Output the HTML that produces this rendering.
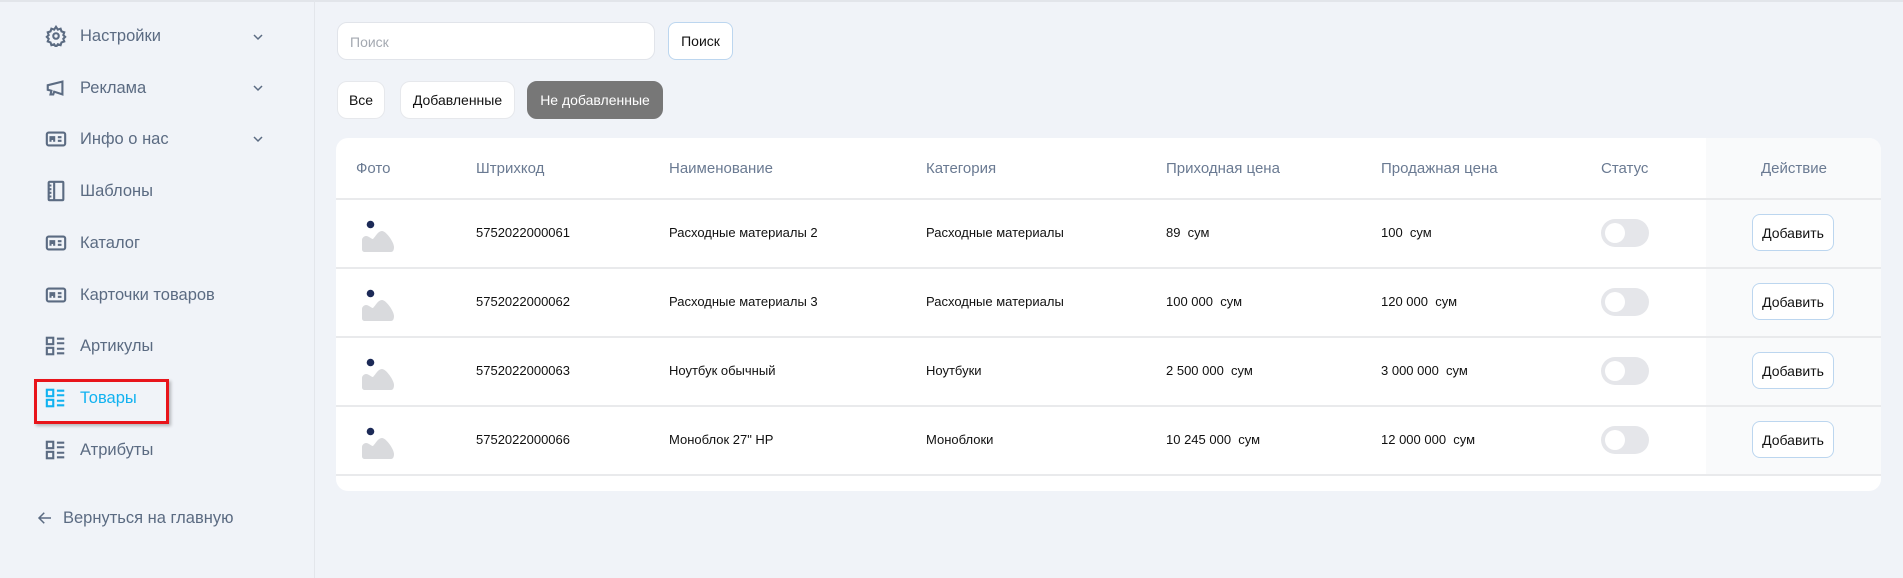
<!DOCTYPE html>
<html><head><meta charset="utf-8"><style>
*{box-sizing:border-box;margin:0;padding:0}
body{width:1903px;height:578px;background:#f0f3f8;font-family:"Liberation Sans",sans-serif;position:relative;overflow:hidden}
.topl{position:absolute;left:0;top:0;width:1903px;height:2px;background:#e2e5ea}
.side{position:absolute;left:0;top:0;width:315px;height:578px;border-right:1px solid #e3e6eb}
.mi{position:absolute;left:45px;height:24px;display:flex;align-items:center;font-size:16.5px;color:#5b6b82}
.mi svg{width:22px;height:22px;margin-right:13px}
.chev{position:absolute;left:252px;width:12px;height:12px}
.abs{position:absolute}
.inp{left:337px;top:22px;width:318px;height:38px;background:#fff;border:1px solid #e1e4ea;border-radius:10px;font-size:14px;color:#a4a9b1;padding:11px 12px}
.btn{background:#fff;border:1px solid #bcd6ef;border-radius:8px;font-size:14px;color:#111;display:flex;align-items:center;justify-content:center}
.chip{top:81px;height:38px;background:#fff;border:1px solid #e6e8ec;border-radius:10px;font-size:14px;color:#111;display:flex;align-items:center;justify-content:center}
.card{left:336px;top:138px;width:1545px;height:353px;background:#fff;border-radius:12px;overflow:hidden}
.act{position:absolute;left:1370px;top:0;width:175px;height:337px;background:#f9fafb}
.hd{position:absolute;top:22px;font-size:15px;color:#6a7a92}
.line{position:absolute;left:0;width:1545px;height:2px;background:#e9eaec}
.td{position:absolute;font-size:13px;color:#111}
.tog{position:absolute;left:1265px;width:48px;height:28px;border-radius:14px;background:#e5e6ea}
.tog:after{content:"";position:absolute;left:4px;top:4px;width:20px;height:20px;border-radius:50%;background:#fff}
.add{position:absolute;left:1416px;width:82px;height:37px}
</style></head><body>
<div class="topl"></div>
<div class="side">
<div class="mi" style="top:24px"><svg viewBox="0 0 24 24" fill="none" stroke="#5b6b82" stroke-width="2.3"><circle cx="12" cy="12" r="3"/><path d="M12 2l2 3 3-1 1 3 3 1-1 3 2 2-2 2 1 3-3 1-1 3-3-1-2 3-2-3-3 1-1-3-3-1 1-3-2-2 2-2-1-3 3-1 1-3 3 1z"/></svg>Настройки</div>
<svg class="chev" style="top:31px" viewBox="0 0 12 12"><path d="M2 4l4 4 4-4" fill="none" stroke="#5b6b82" stroke-width="1.5"/></svg>
<div class="mi" style="top:76px"><svg viewBox="0 0 24 24" fill="none" stroke="#5b6b82" stroke-width="2.3"><path d="M3 9v5l4 1-1 4h3l1-3 9 3V5L3 9z"/></svg>Реклама</div>
<svg class="chev" style="top:82px" viewBox="0 0 12 12"><path d="M2 4l4 4 4-4" fill="none" stroke="#5b6b82" stroke-width="1.5"/></svg>
<div class="mi" style="top:127px"><svg viewBox="0 0 24 24" fill="none" stroke="#5b6b82" stroke-width="2.3"><rect x="2" y="5" width="20" height="14" rx="2"/><path d="M6 15v-5h4v5M6 12h4M14 10h4M14 14h4"/></svg>Инфо о нас</div>
<svg class="chev" style="top:133px" viewBox="0 0 12 12"><path d="M2 4l4 4 4-4" fill="none" stroke="#5b6b82" stroke-width="1.5"/></svg>
<div class="mi" style="top:179px"><svg viewBox="0 0 24 24" fill="none" stroke="#5b6b82" stroke-width="2.3"><rect x="4" y="2" width="16" height="20" rx="1"/><path d="M10 2v20M4 6h3M4 10h3M4 14h3M4 18h3"/></svg>Шаблоны</div>
<div class="mi" style="top:231px"><svg viewBox="0 0 24 24" fill="none" stroke="#5b6b82" stroke-width="2.3"><rect x="2" y="5" width="20" height="14" rx="2"/><path d="M6 15v-5h4v5M6 12h4M14 10h4M14 14h4"/></svg>Каталог</div>
<div class="mi" style="top:283px"><svg viewBox="0 0 24 24" fill="none" stroke="#5b6b82" stroke-width="2.3"><rect x="2" y="5" width="20" height="14" rx="2"/><path d="M6 15v-5h4v5M6 12h4M14 10h4M14 14h4"/></svg>Карточки товаров</div>
<div class="mi" style="top:334px"><svg viewBox="0 0 24 24" fill="none" stroke="#5b6b82" stroke-width="2.3"><rect x="2" y="3" width="7" height="7"/><rect x="2" y="14" width="7" height="7"/><path d="M13 4h8M13 9h8M13 15h8M13 20h8"/></svg>Артикулы</div>
<div class="abs" style="left:34px;top:379px;width:135px;height:45px;border:3px solid #e8141b;box-shadow:2px 2px 3px rgba(0,0,0,.25)"></div>
<div class="mi" style="top:386px;color:#11b2f0"><svg viewBox="0 0 24 24" fill="none" stroke="#11b2f0" stroke-width="2.3"><rect x="2" y="3" width="7" height="7"/><rect x="2" y="14" width="7" height="7"/><path d="M13 4h8M13 9h8M13 15h8M13 20h8"/></svg>Товары</div>
<div class="mi" style="top:438px"><svg viewBox="0 0 24 24" fill="none" stroke="#5b6b82" stroke-width="2.3"><rect x="2" y="3" width="7" height="7"/><rect x="2" y="14" width="7" height="7"/><path d="M13 4h8M13 9h8M13 15h8M13 20h8"/></svg>Атрибуты</div>
<div class="mi" style="top:506px;left:36px"><svg viewBox="0 0 24 24" style="width:18px;height:18px;margin-right:9px" fill="none" stroke="#5b6b82" stroke-width="2"><path d="M20 12H5M11 5l-7 7 7 7"/></svg>Вернуться на главную</div>
</div>
<div class="abs inp">Поиск</div>
<div class="abs btn" style="left:668px;top:22px;width:65px;height:38px">Поиск</div>
<div class="abs chip" style="left:337px;width:48px">Все</div>
<div class="abs chip" style="left:400px;width:115px">Добавленные</div>
<div class="abs chip" style="left:527px;width:136px;background:#777;border-color:#777;color:#fff">Не добавленные</div>
<div class="abs card">
<div class="act"></div>
<div class="hd" style="left:20px">Фото</div>
<div class="hd" style="left:140px">Штрихкод</div>
<div class="hd" style="left:333px">Наименование</div>
<div class="hd" style="left:590px">Категория</div>
<div class="hd" style="left:830px">Приходная цена</div>
<div class="hd" style="left:1045px">Продажная цена</div>
<div class="hd" style="left:1265px">Статус</div>
<div class="hd" style="left:1425px">Действие</div>
<div class="line" style="top:60px"></div>
<div class="line" style="top:129px"></div>
<div class="line" style="top:198px"></div>
<div class="line" style="top:267px"></div>
<div class="line" style="top:336px"></div>

<svg class="abs" style="left:26px;top:82px" width="34" height="34" viewBox="0 0 34 34"><circle cx="8.5" cy="4.5" r="3.8" fill="#1c2a57"/><path d="M3 32c-2 0-3-1-3-3v-9c0-2 2-4 4-4 3 0 5 3 7 3 3-3 5-8 9-8 4 0 12 11 12 16 0 3-1 5-3 5z" fill="#d9dadd"/></svg>
<svg class="abs" style="left:26px;top:151px" width="34" height="34" viewBox="0 0 34 34"><circle cx="8.5" cy="4.5" r="3.8" fill="#1c2a57"/><path d="M3 32c-2 0-3-1-3-3v-9c0-2 2-4 4-4 3 0 5 3 7 3 3-3 5-8 9-8 4 0 12 11 12 16 0 3-1 5-3 5z" fill="#d9dadd"/></svg>
<svg class="abs" style="left:26px;top:220px" width="34" height="34" viewBox="0 0 34 34"><circle cx="8.5" cy="4.5" r="3.8" fill="#1c2a57"/><path d="M3 32c-2 0-3-1-3-3v-9c0-2 2-4 4-4 3 0 5 3 7 3 3-3 5-8 9-8 4 0 12 11 12 16 0 3-1 5-3 5z" fill="#d9dadd"/></svg>
<svg class="abs" style="left:26px;top:289px" width="34" height="34" viewBox="0 0 34 34"><circle cx="8.5" cy="4.5" r="3.8" fill="#1c2a57"/><path d="M3 32c-2 0-3-1-3-3v-9c0-2 2-4 4-4 3 0 5 3 7 3 3-3 5-8 9-8 4 0 12 11 12 16 0 3-1 5-3 5z" fill="#d9dadd"/></svg>

<div class="td" style="left:140px;top:87px">5752022000061</div><div class="td" style="left:333px;top:87px">Расходные материалы 2</div><div class="td" style="left:590px;top:87px">Расходные материалы</div><div class="td" style="left:830px;top:87px">89&nbsp; сум</div><div class="td" style="left:1045px;top:87px">100&nbsp; сум</div>
<div class="td" style="left:140px;top:156px">5752022000062</div><div class="td" style="left:333px;top:156px">Расходные материалы 3</div><div class="td" style="left:590px;top:156px">Расходные материалы</div><div class="td" style="left:830px;top:156px">100 000&nbsp; сум</div><div class="td" style="left:1045px;top:156px">120 000&nbsp; сум</div>
<div class="td" style="left:140px;top:225px">5752022000063</div><div class="td" style="left:333px;top:225px">Ноутбук обычный</div><div class="td" style="left:590px;top:225px">Ноутбуки</div><div class="td" style="left:830px;top:225px">2 500 000&nbsp; сум</div><div class="td" style="left:1045px;top:225px">3 000 000&nbsp; сум</div>
<div class="td" style="left:140px;top:294px">5752022000066</div><div class="td" style="left:333px;top:294px">Моноблок 27" HP</div><div class="td" style="left:590px;top:294px">Моноблоки</div><div class="td" style="left:830px;top:294px">10 245 000&nbsp; сум</div><div class="td" style="left:1045px;top:294px">12 000 000&nbsp; сум</div>
<div class="tog" style="top:81px"></div><div class="tog" style="top:150px"></div><div class="tog" style="top:219px"></div><div class="tog" style="top:288px"></div>
<div class="btn add" style="top:76px">Добавить</div><div class="btn add" style="top:145px">Добавить</div><div class="btn add" style="top:214px">Добавить</div><div class="btn add" style="top:283px">Добавить</div>
</div>
</body></html>
